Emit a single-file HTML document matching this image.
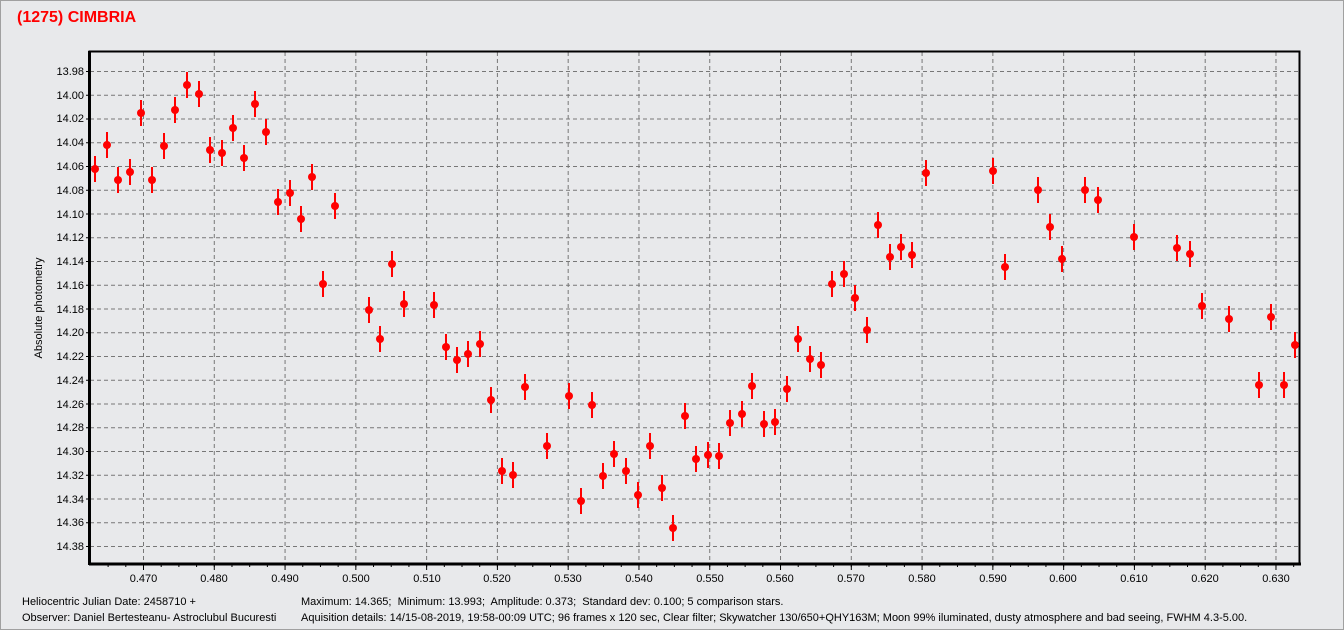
<!DOCTYPE html>
<html><head><meta charset="utf-8"><style>
html,body{margin:0;padding:0;background:#e8e9eb;}
body{width:1344px;height:630px;overflow:hidden;position:relative;font-family:"Liberation Sans",sans-serif;}
.frame{position:absolute;left:0;top:0;width:1342px;height:628px;border:1px solid #a0a0a0;}
.t{position:absolute;font-size:11px;color:#000;white-space:nowrap;}
</style></head><body>
<div class="frame"></div>
<div style="position:absolute;left:17px;top:9px;font-size:16px;font-weight:bold;color:#f00;">(1275) CIMBRIA</div>
<svg id="s" width="1344" height="630" style="position:absolute;left:0;top:0" font-family="Liberation Sans, sans-serif" font-size="11">
<g id="grid" stroke="#777" stroke-dasharray="4,3" stroke-width="1"></g>
<g id="ticks" stroke="#000" stroke-width="1"></g>
<rect x="89.5" y="51.5" width="1210" height="512" fill="none" stroke="#000" stroke-width="2"/>
<line x1="89.5" y1="51" x2="89.5" y2="565" stroke="#000" stroke-width="3"/>
<line x1="89" y1="564" x2="1301" y2="564" stroke="#000" stroke-width="3"/>
<g text-anchor="end" fill="#000">
<text x="84" y="75">13.98</text><text x="84" y="99">14.00</text><text x="84" y="122">14.02</text><text x="84" y="146">14.04</text><text x="84" y="170">14.06</text><text x="84" y="194">14.08</text><text x="84" y="218">14.10</text><text x="84" y="241">14.12</text><text x="84" y="265">14.14</text><text x="84" y="289">14.16</text><text x="84" y="313">14.18</text><text x="84" y="336">14.20</text><text x="84" y="360">14.22</text><text x="84" y="384">14.24</text><text x="84" y="408">14.26</text><text x="84" y="431">14.28</text><text x="84" y="455">14.30</text><text x="84" y="479">14.32</text><text x="84" y="503">14.34</text><text x="84" y="526">14.36</text><text x="84" y="550">14.38</text>
</g>
<g text-anchor="middle" fill="#000">
<text x="143.5" y="582">0.470</text><text x="214" y="582">0.480</text><text x="285" y="582">0.490</text><text x="356" y="582">0.500</text><text x="427" y="582">0.510</text><text x="497" y="582">0.520</text><text x="568" y="582">0.530</text><text x="639" y="582">0.540</text><text x="710" y="582">0.550</text><text x="780" y="582">0.560</text><text x="851" y="582">0.570</text><text x="922" y="582">0.580</text><text x="993" y="582">0.590</text><text x="1063" y="582">0.600</text><text x="1134" y="582">0.610</text><text x="1205" y="582">0.620</text><text x="1276" y="582">0.630</text>
</g>
<text transform="translate(42,308) rotate(-90)" text-anchor="middle" font-size="11">Absolute photometry</text>
<g id="pts"></g>
</svg>
<div class="t" style="left:22px;top:596px;">Heliocentric Julian Date: 2458710 +</div>
<div class="t" style="left:22px;top:612px;">Observer: Daniel Bertesteanu- Astroclubul Bucuresti</div>
<div class="t" style="left:301px;top:596px;">Maximum: 14.365;&nbsp; Minimum: 13.993;&nbsp; Amplitude: 0.373;&nbsp; Standard dev: 0.100; 5 comparison stars.</div>
<div class="t" style="left:301px;top:612px;">Aquisition details: 14/15-08-2019, 19:58-00:09 UTC; 96 frames x 120 sec, Clear filter; Skywatcher 130/650+QHY163M; Moon 99% iluminated, dusty atmosphere and bad seeing, FWHM 4.3-5.00.</div>
<script>
var ns="http://www.w3.org/2000/svg";
function el(p,n,a){var e=document.createElementNS(ns,n);for(var k in a)e.setAttribute(k,a[k]);p.appendChild(e);return e;}
var g=document.getElementById('grid'),tk=document.getElementById('ticks');
for(var i=0;i<21;i++){var y=71.5+i*23.75;el(g,'line',{x1:90,y1:y,x2:1299,y2:y});el(tk,'line',{x1:86,y1:y,x2:90,y2:y});}
for(var i=0;i<84;i++){var y=59.6+i*5.9375;el(tk,'line',{x1:88,y1:y,x2:90,y2:y});}
for(var i=0;i<17;i++){var x=143.5+i*70.78;el(g,'line',{x1:x,y1:52,x2:x,y2:563});el(tk,'line',{x1:x,y1:564,x2:x,y2:570});}
for(var i=-2;i<70;i++){var x=143.5+i*17.695;if(x>90&&x<1300)el(tk,'line',{x1:x,y1:564,x2:x,y2:567});}
var P=[[95,169],[107,145],[118,180],[130,172],[141,113],[152,180],[164,146],[175,110],[187,85],[199,94],[210,150],[222,153],[233,128],[244,158],[255,104],[266,132],[278,202],[290,193],[301,219],[312,177],[323,284],[335,206],[369,310],[380,339],[392,264],[404,304],[434,305],[446,347],[457,360],[468,354],[480,344],[491,400],[502,471],[513,475],[525,387],[547,446],[569,396],[581,501],[592,405],[603,476],[614,454],[626,471],[638,495],[650,446],[662,488],[673,528],[685,416],[696,459],[708,455],[719,456],[730,423],[742,414],[752,386],[764,424],[775,422],[787,389],[798,339],[810,359],[821,365],[832,284],[844,274],[855,298],[867,330],[878,225],[890,257],[901,247],[912,255],[926,173],[993,171],[1005,267],[1038,190],[1050,227],[1062,259],[1085,190],[1098,200],[1134,237],[1177,248],[1190,254],[1202,306],[1229,319],[1259,385],[1271,317],[1284,385],[1295,345]];
var pg=document.getElementById('pts');
P.forEach(function(p){el(pg,'line',{x1:p[0],y1:p[1]-13,x2:p[0],y2:p[1]+13,stroke:'#f00','stroke-width':2});el(pg,'circle',{cx:p[0],cy:p[1],r:4,fill:'#f00'});});
</script>
</body></html>
